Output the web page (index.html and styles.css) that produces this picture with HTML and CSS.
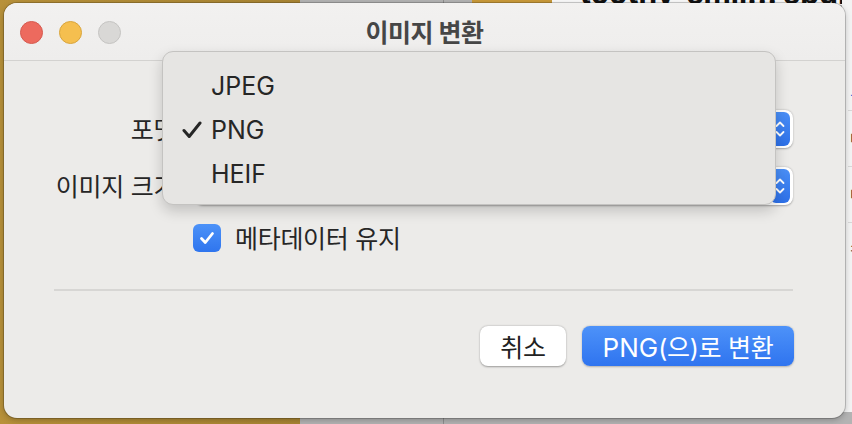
FILE: index.html
```html
<!DOCTYPE html>
<html lang="ko">
<head>
    <meta charset="UTF-8">
    <title>이미지 변환</title>
    <link rel="stylesheet" href="styles.css">
</head>
<body>
    <div class="desk">
        <div class="desk-file"></div>
        <div class="desk-name"><span>toothy_smil... sbdbc</span></div>
        <div class="desk-side">
            <span class="side-link">ㅎ</span>
            <span class="side-row">ㅌ</span>
            <span class="side-row">ㅌ</span>
            <span class="side-row">ㅋ</span>
        </div>
    </div>

    <div class="window">
        <div class="titlebar">
            <div class="lights">
                <span class="light red"></span>
                <span class="light yellow"></span>
                <span class="light gray"></span>
            </div>
            <div class="title">이미지 변환</div>
            <div></div>
        </div>

        <div class="content">
            <div class="form">
                <label class="label">포맷:</label>
                <div class="popup">
                    <span class="popup-text">PNG</span>
                    <span class="stepper">
                        <svg width="12" height="22" viewBox="0 0 12 22"><path d="M2.5 8 6 4.5 9.5 8M2.5 14 6 17.5 9.5 14" fill="none" stroke="#fff" stroke-width="1.8" stroke-linecap="round" stroke-linejoin="round"/></svg>
                    </span>
                </div>

                <label class="label">이미지 크기:</label>
                <div class="popup">
                    <span class="popup-text">실제 크기</span>
                    <span class="stepper">
                        <svg width="12" height="22" viewBox="0 0 12 22"><path d="M2.5 8 6 4.5 9.5 8M2.5 14 6 17.5 9.5 14" fill="none" stroke="#fff" stroke-width="1.8" stroke-linecap="round" stroke-linejoin="round"/></svg>
                    </span>
                </div>

                <span></span>
                <div class="check-row">
                    <span class="checkbox">
                        <svg width="20" height="20" viewBox="0 0 20 20"><path d="M4.5 10.5 8.3 14.5 15.5 5.5" fill="none" stroke="#fff" stroke-width="2.8" stroke-linecap="round" stroke-linejoin="round"/></svg>
                    </span>
                    <span class="check-text">메타데이터 유지</span>
                </div>
            </div>

            <hr class="sep">

            <div class="actions">
                <button class="btn ko">취소</button>
                <button class="btn btn-blue">PNG<span class="ko">(으)로 변환</span></button>
            </div>
        </div>

        <div class="menu">
            <div class="menu-item">JPEG</div>
            <div class="menu-item">
                <svg class="tick" width="20" height="18" viewBox="0 0 20 18"><path d="M2 9.5 7.2 15.5 18 2" fill="none" stroke="#262626" stroke-width="3" stroke-linecap="round" stroke-linejoin="round"/></svg>
                PNG
            </div>
            <div class="menu-item">HEIF</div>
        </div>
    </div>
</body>
</html>
```

FILE: styles.css
```css
body{
    margin: 0;
    padding: 3px 0 0 4px;
    width: 852px;
    height: 424px;
    box-sizing: border-box;
    overflow: hidden;
    position: relative;
    font-family: Inter, "Noto Sans CJK KR", sans-serif;
    background: linear-gradient(to right, #b8913a 0, #a98533 300px, #b3b3b3 300px, #b3b3b3 443px, #8f8f8f 443px, #8f8f8f 444px, #b3b3b3 444px);
}

/* what lies under the dialog */
.desk-file{
    position: absolute;
    left: 472px;
    top: 0;
    width: 80px;
    height: 6px;
    background: #c99a3a;
}
.desk-name{
    position: absolute;
    left: 552px;
    top: 0;
    width: 300px;
    height: 5px;
    overflow: hidden;
    background: #fafafa;
}
.desk-name span{
    display: block;
    margin-top: -20px;
    padding-left: 28px;
    font-size: 30px;
    font-weight: 700;
    line-height: 26px;
    color: #111;
    white-space: nowrap;
}
.desk-side{
    position: absolute;
    right: 0;
    top: 0;
    width: 10px;
    height: 412px;
    background: #f3f3f3;
    display: flex;
    flex-direction: column;
    font-size: 18px;
    color: #333;
}
.side-link{
    margin-top: 84px;
    color: #2f6fdb;
    margin-left: 6px;
}
.side-row{
    margin-left: 6px;
    height: 55px;
    line-height: 55px;
    border-top: 1px solid #d8d8d8;
}

.window{
    position: relative;
    z-index: 1;
    width: 841px;
    height: 415px;
    box-sizing: border-box;
    border-radius: 13px;
    background: #ecebe9;
    box-shadow: 0 0 0 1px rgba(0,0,0,0.18), 0 2px 6px rgba(0,0,0,0.25);
}

.titlebar{
    height: 57px;
    display: grid;
    grid-template-columns: 1fr auto 1fr;
    align-items: center;
    background: linear-gradient(#f2f1f0, #eeedec);
    border-bottom: 1px solid #d3d2d0;
    border-radius: 13px 13px 0 0;
}
.lights{
    display: flex;
    gap: 16px;
    padding-left: 16px;
    margin-top: 1px;
}
.light{
    width: 23px;
    height: 23px;
    border-radius: 50%;
    box-sizing: border-box;
}
.red{
    background: #ed6a5e;
    border: 1px solid #d65a4f;
}
.yellow{
    background: #f5bf4f;
    border: 1px solid #d9a53c;
}
.gray{
    background: #d9d8d6;
    border: 1px solid #c5c4c2;
}
.title{
    font-size: 25px;
    font-weight: 700;
    color: #464646;
    letter-spacing: -0.5px;
    margin-top: -2px;
}

.content{
    padding: 49px 52px 0 50px;
}
.form{
    display: grid;
    grid-template-columns: 129px 1fr;
    column-gap: 12px;
    row-gap: 19px;
    align-items: center;
}
.label{
    text-align: right;
    font-size: 25px;
    color: #262626;
    letter-spacing: -0.3px;
    margin-top: -3px;
    white-space: nowrap;
}
.popup{
    height: 38px;
    border-radius: 8px;
    background: #fff;
    box-shadow: 0 0.5px 2px rgba(0,0,0,0.3);
    display: flex;
    align-items: center;
    justify-content: space-between;
    padding: 0 3px 0 14px;
    font-size: 22px;
    color: #222;
}
.stepper{
    width: 20px;
    height: 34px;
    border-radius: 6px;
    background: linear-gradient(#4a8ff7, #2d70e8);
    display: flex;
    align-items: center;
    justify-content: center;
}
.check-row{
    display: flex;
    align-items: center;
    gap: 14px;
    margin-left: -2px;
    margin-top: -3px;
}
.checkbox{
    width: 28px;
    height: 28px;
    border-radius: 6px;
    background: linear-gradient(#4c92f8, #2f75ee);
    display: flex;
    align-items: center;
    justify-content: center;
}
.check-text{
    font-size: 25px;
    color: #262626;
    letter-spacing: -0.3px;
    margin-top: -2px;
}

.sep{
    border: none;
    border-top: 2px solid #d7d6d4;
    margin: 34px 0 0 0;
}

.actions{
    display: flex;
    justify-content: flex-end;
    gap: 16px;
    margin-top: 35px;
    margin-right: -1px;
}
.btn{
    height: 40px;
    border: none;
    border-radius: 8px;
    background: #fff;
    box-shadow: 0 0.5px 2px rgba(0,0,0,0.35);
    font-family: Inter, "Noto Sans CJK KR", sans-serif;
    font-size: 26px;
    color: #222;
    width: 86px;
    padding: 0;
}
.ko{
    font-size: 25px;
    letter-spacing: -0.3px;
}
.btn-blue{
    width: 212px;
    color: #fff;
    background: linear-gradient(#4d92f9, #2f74ef);
    box-shadow: 0 0.5px 2px rgba(0,0,0,0.25);
}

.menu{
    position: absolute;
    left: 158px;
    top: 48px;
    width: 614px;
    height: 154px;
    box-sizing: border-box;
    padding-top: 12px;
    border-radius: 11px;
    background: #e6e5e3;
    border: 1px solid #c4c3c1;
    box-shadow: 0 6px 14px rgba(0,0,0,0.18);
}
.menu-item{
    height: 44px;
    line-height: 44px;
    padding-left: 48px;
    font-size: 25px;
    color: #262626;
    position: relative;
}
.tick{
    position: absolute;
    left: 19px;
    top: 13px;
}
```
